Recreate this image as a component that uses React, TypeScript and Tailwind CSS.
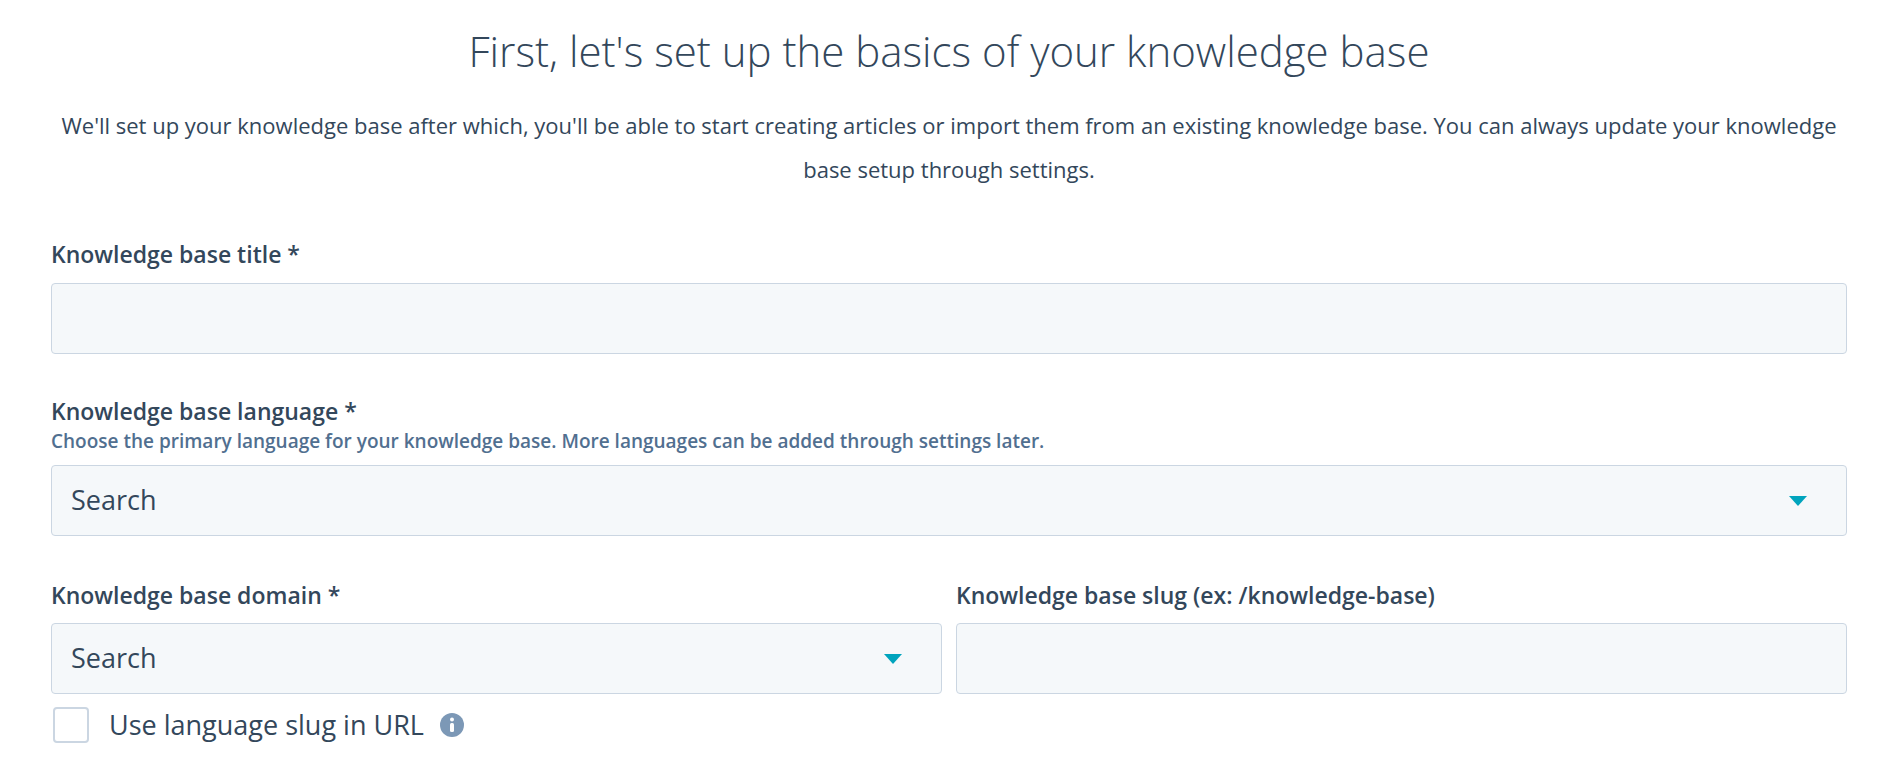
export default function App() {
  const f = { fontFamily: "'Open Sans', Lato, sans-serif" };
  const Caret = () => (
    <svg width="20" height="12" viewBox="0 0 20 12"><path d="M1 1h18L10 11z" fill="#00a4bd" /></svg>
  );
  return (
    <div style={f} className="w-[1898px] h-[778px] bg-white text-[#33475b] overflow-hidden">
      <div className="px-[51px]">
        <h1 className="text-center text-[42px] font-light leading-none pt-[30px]">First, let's set up the basics of your knowledge base</h1>
        <p className="text-center text-[22px] leading-[44px] mt-[31px] px-[10px]">
          We'll set up your knowledge base after which, you'll be able to start creating articles or import them from an existing knowledge base. You can always update your knowledge base setup through settings.
        </p>
        <div className="mt-[48px] text-[23px] font-semibold leading-[30px]">Knowledge base title *</div>
        <div className="mt-[14px] h-[71px] bg-[#f5f8fa] border border-[#cbd6e2] rounded-[4px]" />
        <div className="mt-[42px] text-[23px] font-semibold leading-[30px]">Knowledge base language *</div>
        <div className="text-[19px] font-semibold text-[#516f90] leading-[26px] mt-[2px]">Choose the primary language for your knowledge base. More languages can be added through settings later.</div>
        <div className="mt-[11px] h-[71px] bg-[#f5f8fa] border border-[#cbd6e2] rounded-[4px] flex items-center justify-between px-[19px]">
          <span className="text-[27px]">Search</span>
          <span className="mr-[19px]"><Caret /></span>
        </div>
        <div className="mt-[44px] grid grid-cols-2 gap-[14px]">
          <div>
            <div className="text-[23px] font-semibold leading-[30px]">Knowledge base domain *</div>
            <div className="mt-[13px] h-[71px] bg-[#f5f8fa] border border-[#cbd6e2] rounded-[4px] flex items-center justify-between px-[19px]">
              <span className="text-[27px]">Search</span>
              <span className="mr-[19px]"><Caret /></span>
            </div>
          </div>
          <div>
            <div className="text-[23px] font-semibold leading-[30px]">Knowledge base slug (ex: /knowledge-base)</div>
            <div className="mt-[13px] h-[71px] bg-[#f5f8fa] border border-[#cbd6e2] rounded-[4px]" />
          </div>
        </div>
        <div className="mt-[11px] flex items-center">
          <div className="w-[36px] h-[36px] ml-[2px] border-2 border-[#cbd6e2] rounded-[4px] bg-white" />
          <span className="ml-[20px] text-[27px]">Use language slug in URL</span>
          <svg className="ml-[16px]" width="24" height="24" viewBox="0 0 24 24">
            <circle cx="12" cy="12" r="12" fill="#7c98b6" />
            <circle cx="12" cy="6.5" r="2" fill="white" />
            <rect x="10" y="10" width="4" height="9" rx="1.5" fill="white" />
          </svg>
        </div>
      </div>
    </div>
  );
}
